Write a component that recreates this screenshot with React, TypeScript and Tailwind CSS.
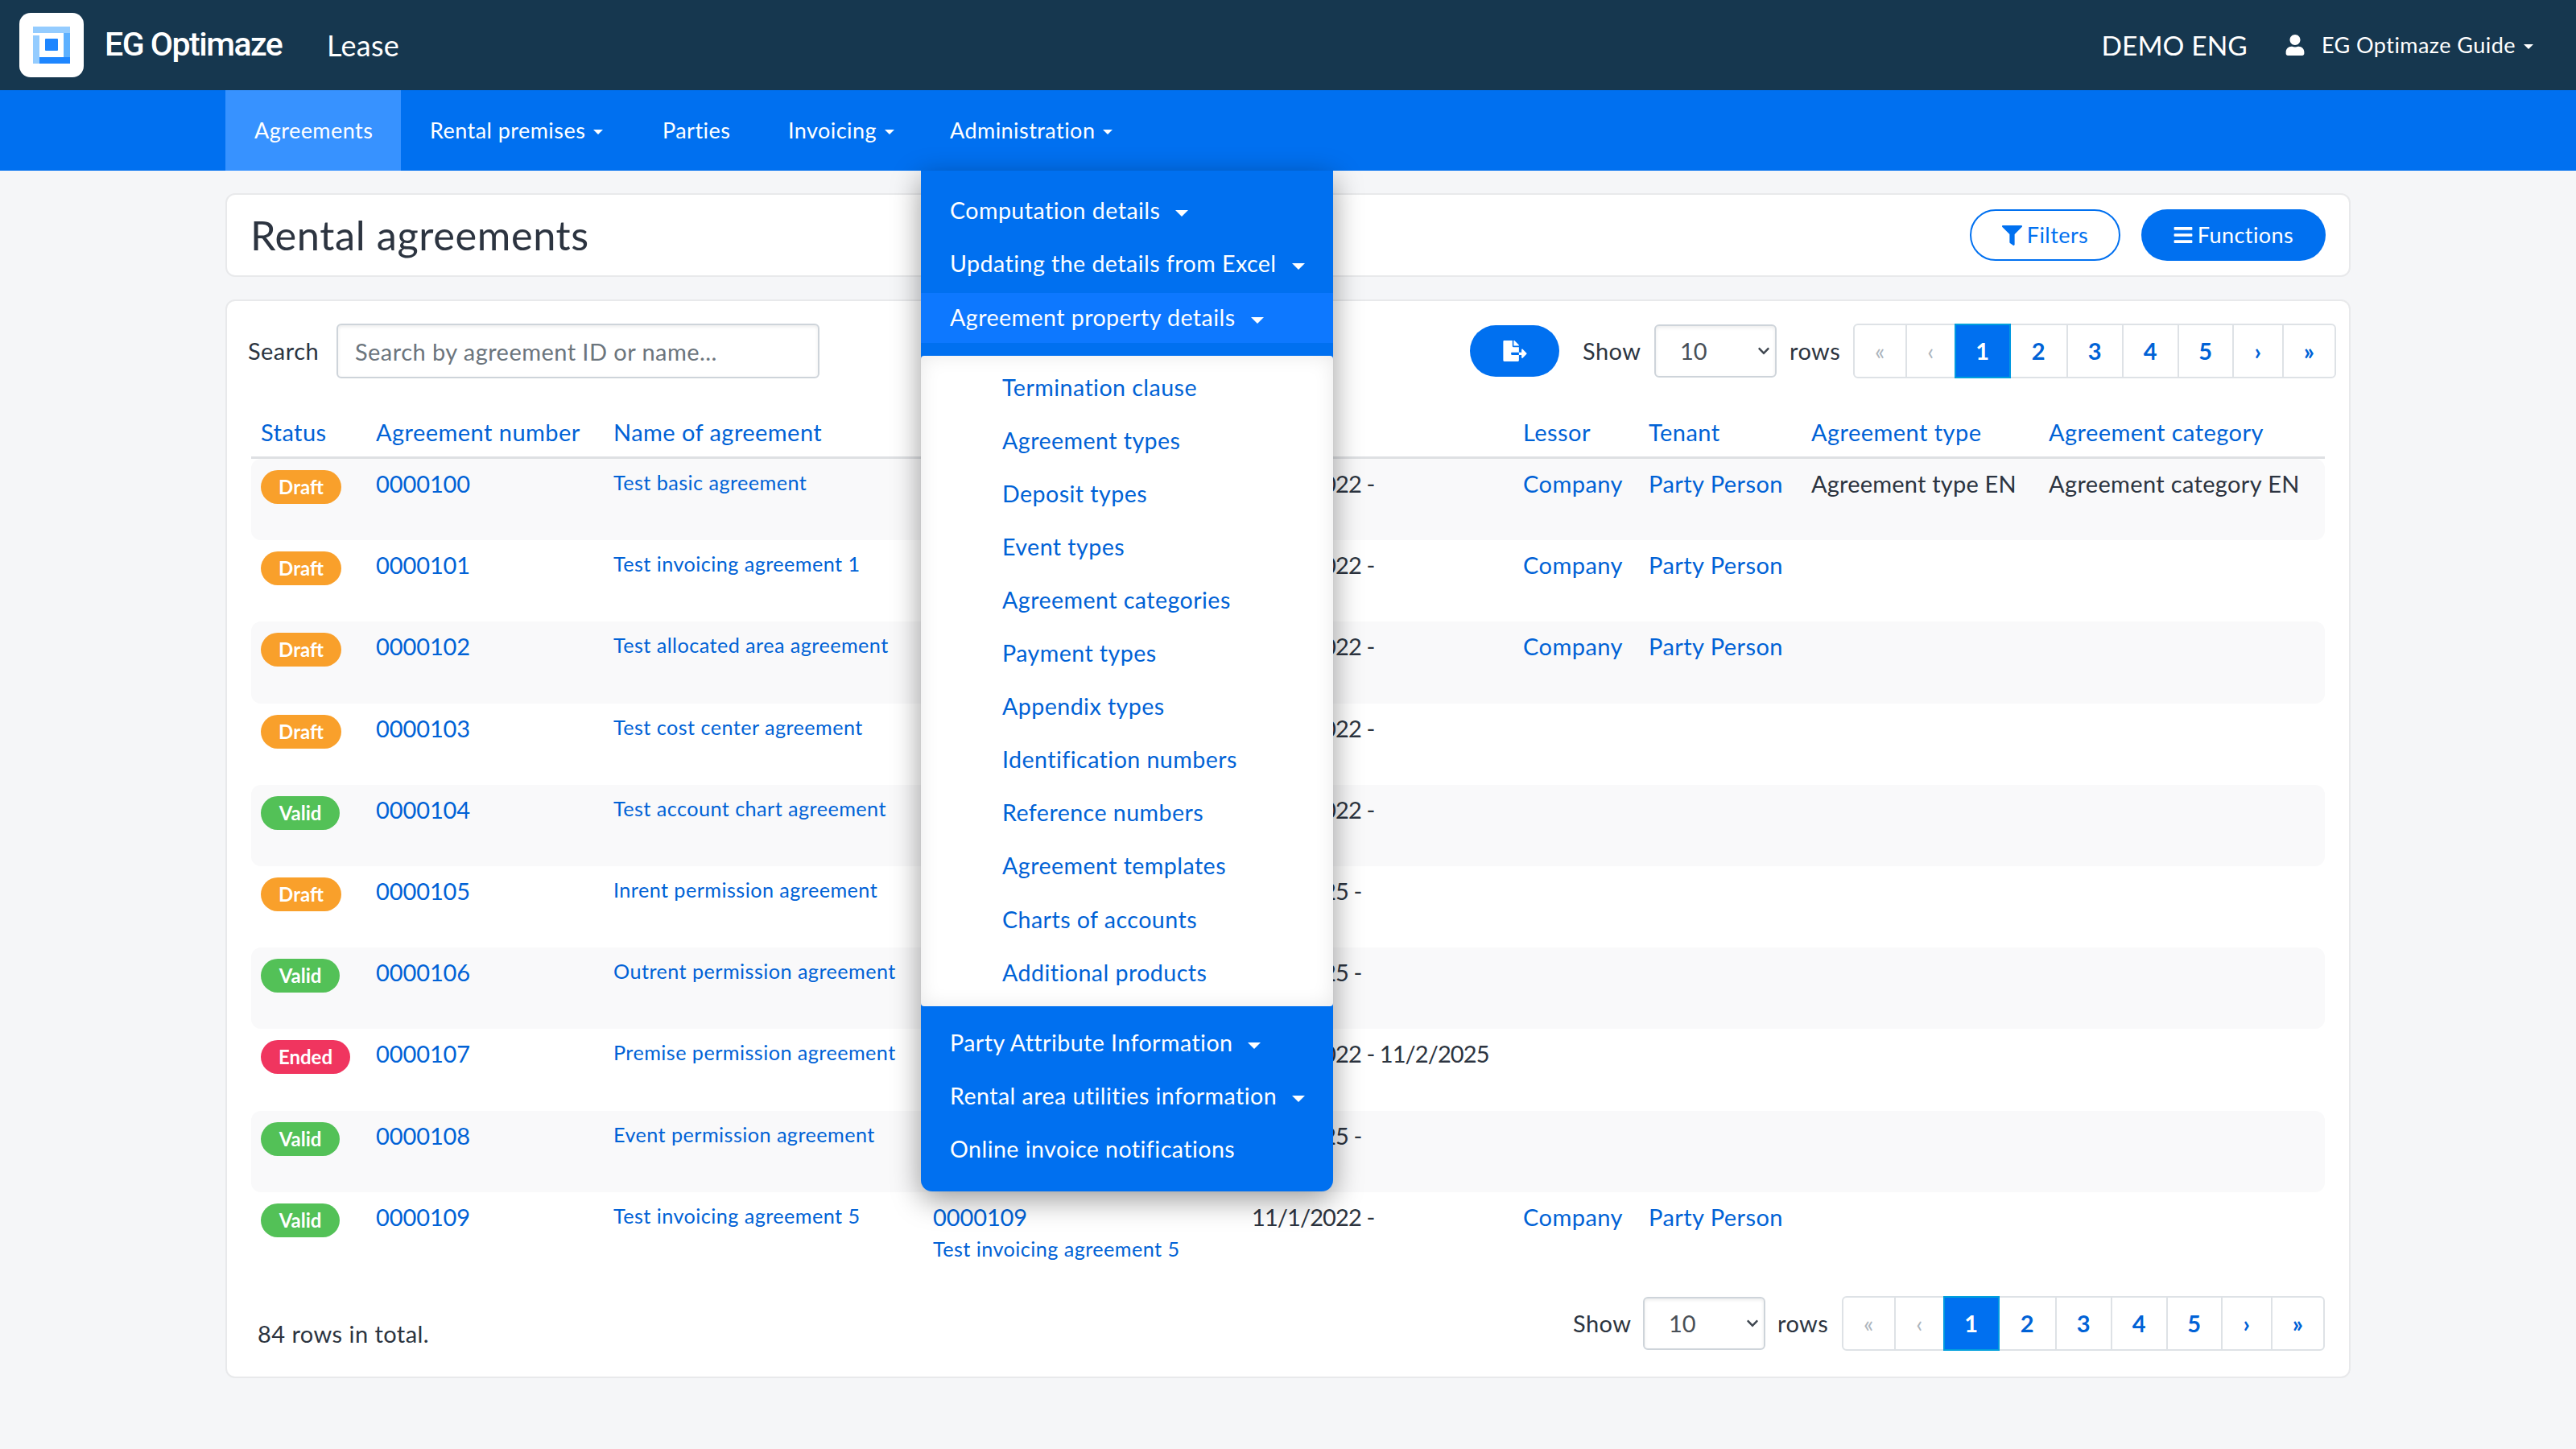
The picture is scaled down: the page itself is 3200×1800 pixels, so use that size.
import React from "react";
import { FaBars, FaChevronDown, FaFileExport, FaFilter, FaUser } from "react-icons/fa";

type Status = "Draft" | "Valid" | "Ended";

interface Row {
  status: Status;
  number: string;
  name: string;
  period: string;
  lessor?: string;
  tenant?: string;
  type?: string;
  category?: string;
}

const rows: Row[] = [
  { status: "Draft", number: "0000100", name: "Test basic agreement", period: "11/1/2022 -", lessor: "Company", tenant: "Party Person", type: "Agreement type EN", category: "Agreement category EN" },
  { status: "Draft", number: "0000101", name: "Test invoicing agreement 1", period: "11/1/2022 -", lessor: "Company", tenant: "Party Person" },
  { status: "Draft", number: "0000102", name: "Test allocated area agreement", period: "11/1/2022 -", lessor: "Company", tenant: "Party Person" },
  { status: "Draft", number: "0000103", name: "Test cost center agreement", period: "11/1/2022 -" },
  { status: "Valid", number: "0000104", name: "Test account chart agreement", period: "11/1/2022 -" },
  { status: "Draft", number: "0000105", name: "Inrent permission agreement", period: "1/1/2025 -" },
  { status: "Valid", number: "0000106", name: "Outrent permission agreement", period: "1/1/2025 -" },
  { status: "Ended", number: "0000107", name: "Premise permission agreement", period: "11/1/2022 - 11/2/2025" },
  { status: "Valid", number: "0000108", name: "Event permission agreement", period: "1/1/2025 -" },
  { status: "Valid", number: "0000109", name: "Test invoicing agreement 5", period: "11/1/2022 -", lessor: "Company", tenant: "Party Person" },
];

const badgeClass: Record<Status, string> = {
  Draft: "bg-[#F9A02B] w-[100px]",
  Valid: "bg-[#53C157] w-[98px]",
  Ended: "bg-[#F0355F] w-[111px]",
};

const gridCols = "grid grid-cols-[143px_295px_397px_396px_337px_156px_202px_295px_355px]";

const navItems = [
  { label: "Agreements", width: "w-[218px]", active: true },
  { label: "Rental premises", width: "w-[289px]", caret: true },
  { label: "Parties", width: "w-[156px]" },
  { label: "Invoicing", width: "w-[201px]", caret: true },
];

const topGroups = ["Computation details", "Updating the details from Excel"];
const subItems = [
  "Termination clause",
  "Agreement types",
  "Deposit types",
  "Event types",
  "Agreement categories",
  "Payment types",
  "Appendix types",
  "Identification numbers",
  "Reference numbers",
  "Agreement templates",
  "Charts of accounts",
  "Additional products",
];

const Caret = ({ big }: { big?: boolean }) => (
  <span
    className={
      big
        ? "inline-block ml-[19px] mt-[7px] align-middle border-x-[8px] border-t-[8px] border-x-transparent border-t-white"
        : "inline-block ml-[10px] mt-[3px] align-middle border-x-[6px] border-t-[6px] border-x-transparent border-t-white"
    }
  />
);

const Pager = () => {
  const cells = [
    { t: "«", w: "w-[63px]", off: true },
    { t: "‹", w: "w-[61px]", off: true },
    { t: "1", w: "w-[70px]", on: true },
    { t: "2", w: "w-[69px]" },
    { t: "3", w: "w-[69px]" },
    { t: "4", w: "w-[69px]" },
    { t: "5", w: "w-[68px]" },
    { t: "›", w: "w-[62px]" },
    { t: "»", w: "w-[65px]" },
  ];
  return (
    <div className="flex h-[68px] rounded-[6px] border-2 border-[#dee2e6] bg-white">
      {cells.map((c, i) => (
        <div
          key={c.t}
          className={`${c.w} -my-[2px] flex items-center justify-center font-bold text-[29px] ${
            c.on
              ? "bg-[#0070F0] border-2 border-[#00A0DC] border-x-[#0098E0] text-white"
              : c.off
                ? "text-[#adb5bd] font-normal"
                : "text-[#0062D6]"
          } ${!c.on && i > 0 && i !== 3 ? "border-l-2 border-[#dee2e6]" : ""}`}
        >
          {c.t}
        </div>
      ))}
    </div>
  );
};

const RowsSelect = () => (
  <div className="relative w-[152px] h-[66px]">
    <select
      defaultValue="10"
      className="appearance-none w-full h-full rounded-[6px] border-2 border-[#ced4da] bg-white pl-[30px] pr-[8px] text-[29px] tracking-[-0.1px] text-[#495057] shadow-[inset_0_2px_4px_rgba(0,0,0,0.08)]"
    >
      <option value="10">10</option>
      <option value="25">25</option>
      <option value="50">50</option>
    </select>
    <FaChevronDown className="absolute right-[6px] top-[25px] w-[20px] h-[16px] text-[#3F4750] pointer-events-none" />
  </div>
);

const AdminMenu = () => (
  <div className="absolute left-0 top-full z-20 w-[512px] h-[1268px] rounded-b-[14px] bg-[#0070F0] shadow-[0_10px_36px_rgba(0,0,0,0.4)] flex flex-col text-white text-[28.6px] tracking-[0.45px]">
    <div className="pt-[16px]">
      {topGroups.map((g) => (
        <div key={g} className="h-[66px] pl-[36px] flex items-center whitespace-nowrap">
          {g}
          <Caret big />
        </div>
      ))}
      <div className="mt-[4px] h-[62px] pb-[2px] pl-[36px] flex items-center whitespace-nowrap bg-[#0D78FF]">
        Agreement property details
        <Caret big />
      </div>
    </div>
    <div className="mt-[16px] h-[808px] rounded-[4px] bg-white shadow-[inset_0_0_24px_rgba(0,0,0,0.09)] pt-[6px]">
      {subItems.map((s) => (
        <div key={s} className="h-[66.1px] pl-[101px] flex items-center text-[#0062D6] whitespace-nowrap">
          {s}
        </div>
      ))}
    </div>
    <div className="pt-[12px]">
      {["Party Attribute Information", "Rental area utilities information"].map((g) => (
        <div key={g} className="h-[66px] pl-[36px] flex items-center whitespace-nowrap">
          {g}
          <Caret big />
        </div>
      ))}
      <div className="h-[66px] pl-[36px] flex items-center whitespace-nowrap">Online invoice notifications</div>
    </div>
  </div>
);

const Logo = () => (
  <div className="w-[80px] h-[80px] rounded-[14px] bg-white flex items-center justify-center">
    <svg width="46" height="46" viewBox="0 0 46 46">
      <rect x="0" y="0" width="46" height="8" fill="#94CCFF" />
      <rect x="0" y="11" width="8" height="35" fill="#94CCFF" />
      <rect x="38" y="8" width="8" height="30" fill="#5CB0FF" />
      <rect x="8" y="38" width="38" height="8" fill="#1E86FF" />
      <rect x="15" y="15" width="16" height="15" rx="1" fill="#1E86FF" />
    </svg>
  </div>
);

export default function App() {
  return (
    <div className="min-h-[1800px] bg-[#F5F6F8] font-['Lato',sans-serif] text-[29px] text-[#2C3440] tracking-[0.45px]">
      {/* Top bar */}
      <header className="h-[112px] bg-[#16374F] flex items-center pl-[24px] pr-[53px] text-white">
        <Logo />
        <span className="ml-[26px] font-['Roboto',sans-serif] font-medium text-[41px] tracking-[-1.5px] w-[277px]">EG Optimaze</span>
        <span className="-ml-[1px] text-[36px] tracking-[0.3px]">Lease</span>
        <span className="ml-auto text-[33.5px] tracking-[0.1px] pr-[-1px]">DEMO ENG</span>
        <FaUser className="ml-[47px] w-[24px] h-[26px]" />
        <span className="ml-[21px] text-[27px]">EG Optimaze Guide</span>
        <Caret />
      </header>

      {/* Nav */}
      <nav className="h-[100px] bg-[#0070F0] pl-[280px] flex text-white text-[27px]">
        {navItems.map((n) => (
          <div
            key={n.label}
            className={`${n.width} h-full pl-[36px] flex items-center whitespace-nowrap ${n.active ? "bg-[#3792FF]" : ""}`}
          >
            {n.label}
            {n.caret && <Caret />}
          </div>
        ))}
        <div className="relative h-full pl-[36px] flex items-center whitespace-nowrap">
          Administration
          <Caret />
          <AdminMenu />
        </div>
      </nav>

      <main className="px-[280px] pt-[28px]">
        {/* Title card */}
        <section className="h-[104px] rounded-[12px] border-2 border-[#E8E9EB] bg-white flex items-center pl-[29px] pr-[29px]">
          <h1 className="text-[50.5px] tracking-[0.6px] text-[#2C3440]">Rental agreements</h1>
          <button className="ml-auto h-[64px] w-[187px] rounded-full border-2 border-[#0070F0] bg-white text-[#0070F0] text-[27px] flex items-center justify-center gap-[6px]">
            <FaFilter className="w-[25px] h-[25px]" />
            Filters
          </button>
          <button className="ml-[26px] h-[64px] w-[229px] rounded-full bg-[#0070F0] text-white text-[27px] flex items-center justify-center gap-[6px]">
            <FaBars className="w-[24px] h-[26px]" />
            Functions
          </button>
        </section>

        {/* Table card */}
        <section className="mt-[28px] h-[1340px] rounded-[12px] border-2 border-[#E8E9EB] bg-white pt-[28px] px-[30px] flex flex-col">
          <div className="flex items-center h-[68px] -ml-[4px] -mr-[14px]">
            <label className="w-[110px] whitespace-nowrap">Search</label>
            <input
              placeholder="Search by agreement ID or name..."
              className="w-[600px] h-[68px] rounded-[6px] border-2 border-[#ced4da] pl-[21px] text-[29px] placeholder:text-[#6c757d] shadow-[inset_0_2px_4px_rgba(0,0,0,0.08)]"
            />
            <button className="ml-auto w-[111px] h-[64px] rounded-full bg-[#0070F0] text-white flex items-center justify-center">
              <FaFileExport className="w-[32px] h-[26px]" />
            </button>
            <span className="ml-[29px] w-[89px]">Show</span>
            <RowsSelect />
            <span className="ml-[16px] w-[79px]">rows</span>
            <Pager />
          </div>

          <div className={`${gridCols} mt-[32px] h-[68px] border-b-[3px] border-[#DEE0E3] text-[#0062D6]`}>
            {["Status", "Agreement number", "Name of agreement", "", "", "Lessor", "Tenant", "Agreement type", "Agreement category"].map((h, i) => (
              <div key={i} className="pl-[12px] pt-[13px] whitespace-nowrap">
                {h}
              </div>
            ))}
          </div>

          {rows.map((r, i) => (
            <div key={r.number} className={`${gridCols} h-[101.2px] rounded-[12px] ${i % 2 === 0 ? "bg-[#F9F9FA]" : ""}`}>
              <div className="pl-[12px] pt-[14px]">
                <span className={`${badgeClass[r.status]} h-[42px] rounded-full text-white font-bold text-[24px] tracking-normal flex items-center justify-center`}>
                  {r.status}
                </span>
              </div>
              <div className="pl-[12px] pt-[9px] text-[#0062D6] tracking-[-0.1px]">{r.number}</div>
              <div className="pl-[12px] pt-[11px] text-[25.2px] text-[#0062D6] whitespace-nowrap">{r.name}</div>
              <div className="pl-[12px] pt-[9px] text-[#0062D6]">
                {/* the other rows of this column lie under the open menu */}
                {i === rows.length - 1 && (
                  <>
                    <div className="tracking-[-0.1px]">{r.number}</div>
                    <div className="text-[25.2px] whitespace-nowrap">{r.name}</div>
                  </>
                )}
              </div>
              <div className="pl-[12px] pt-[9px] whitespace-nowrap tracking-[-0.9px]">{r.period}</div>
              <div className="pl-[12px] pt-[9px] text-[#0062D6]">{r.lessor}</div>
              <div className="pl-[12px] pt-[9px] text-[#0062D6] whitespace-nowrap">{r.tenant}</div>
              <div className="pl-[12px] pt-[9px] whitespace-nowrap tracking-[0.2px]">{r.type}</div>
              <div className="pl-[12px] pt-[9px] whitespace-nowrap tracking-[0.35px]">{r.category}</div>
            </div>
          ))}

          <div className="mt-[28px] flex items-center h-[68px]">
            <span className="pl-[8px] pt-[26px]">84 rows in total.</span>
            <span className="ml-auto w-[87px]">Show</span>
            <RowsSelect />
            <span className="ml-[15px] w-[80px]">rows</span>
            <Pager />
          </div>
        </section>
      </main>
    </div>
  );
}
